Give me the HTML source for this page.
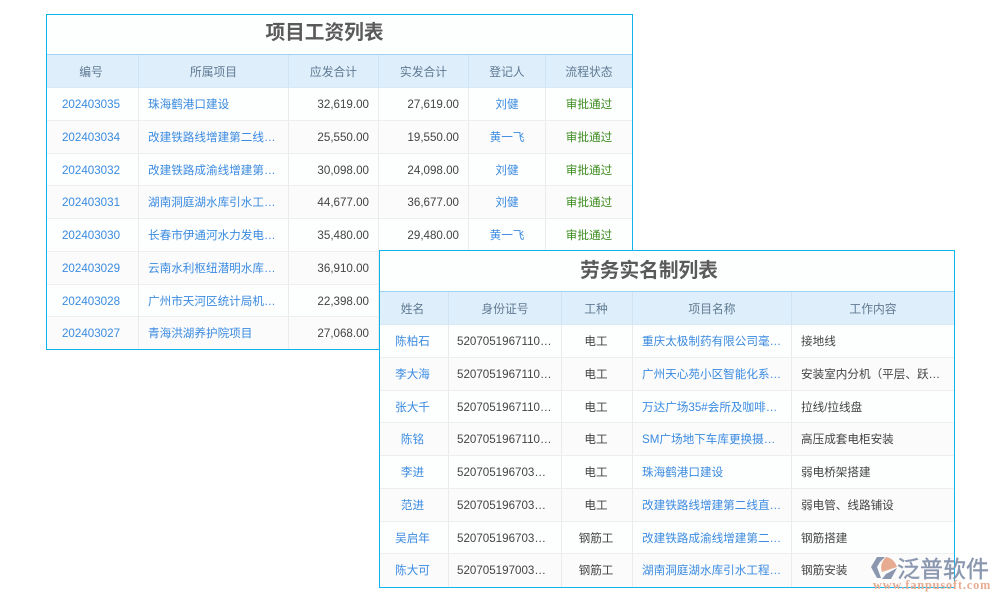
<!DOCTYPE html>
<html lang="zh">
<head>
<meta charset="utf-8">
<style>
html,body{margin:0;padding:0;width:1000px;height:600px;overflow:hidden;background:#fff}
body{position:relative;font-family:"Liberation Sans","Noto Sans CJK SC",sans-serif;font-size:11.6px;color:#444}
.t{position:absolute;box-sizing:border-box;border:1px solid #0fb3ee;background:#fdfefe;overflow:hidden}
.h1{position:absolute;left:0;right:0;top:0;height:39px;line-height:36px;text-align:center;font-size:19.7px;font-weight:bold;color:#5a5a5a}
.r{position:absolute;left:0;right:0;height:32.75px;display:flex;box-sizing:border-box;border-bottom:1px solid #eeeeee;line-height:33px}
.r.e{background:#fbfbfc}
.r.hd{background:#dfeefb;border-top:1px solid #9fd2f5;border-bottom:1px solid #d8e8f5;color:#5f7a92;height:34px;line-height:35px;font-size:11.8px}
.r>div{box-sizing:border-box;border-right:1px solid #ebebeb;white-space:nowrap;overflow:hidden;text-align:center}
.r.hd>div{border-right:1px solid #cfe3f3}
.r>div:last-child{border-right:0;flex:1}
.b{color:#3b8be0}
.l{text-align:left!important;padding-left:9px}
.n{text-align:right!important;padding-right:9px}
.g{color:#3c8c1e}
.c1{width:92px;padding-right:3px}.c2{width:150px}.c3{width:90px}.c4{width:90px}.c5{width:77px}
.d1{width:69px;padding-right:3px}.d2{width:113px}.d3{width:71px;padding-right:2px}.d4{width:159px}
.d2.l{padding-left:8px}
#logo{position:absolute;left:870px;top:554px;width:125px;height:40px}
#logo .a{position:absolute;left:27px;top:-2px;font-size:23px;line-height:30px;font-weight:normal;-webkit-text-stroke:.4px #8a97ae;color:#8a97ae;font-family:"Noto Sans CJK SC",sans-serif;white-space:nowrap}
#logo .u{position:absolute;left:3px;top:23.5px;font-family:"Liberation Serif",serif;font-size:12.2px;line-height:14px;font-weight:bold;color:#e6ab90;letter-spacing:.9px;white-space:nowrap}
</style>
</head>
<body>

<div class="t" style="left:46px;top:14px;width:587px;height:336px">
  <div class="h1" style="padding-right:30px">项目工资列表</div>
  <div class="r hd" style="top:39px"><div class="c1">编号</div><div class="c2">所属项目</div><div class="c3">应发合计</div><div class="c4">实发合计</div><div class="c5">登记人</div><div>流程状态</div></div>
  <div class="r" style="top:73px"><div class="c1 b">202403035</div><div class="c2 b l">珠海鹤港口建设</div><div class="c3 n">32,619.00</div><div class="c4 n">27,619.00</div><div class="c5 b">刘健</div><div class="g">审批通过</div></div>
  <div class="r e" style="top:105.75px"><div class="c1 b">202403034</div><div class="c2 b l">改建铁路线增建第二线…</div><div class="c3 n">25,550.00</div><div class="c4 n">19,550.00</div><div class="c5 b">黄一飞</div><div class="g">审批通过</div></div>
  <div class="r" style="top:138.5px"><div class="c1 b">202403032</div><div class="c2 b l">改建铁路成渝线增建第…</div><div class="c3 n">30,098.00</div><div class="c4 n">24,098.00</div><div class="c5 b">刘健</div><div class="g">审批通过</div></div>
  <div class="r e" style="top:171.25px"><div class="c1 b">202403031</div><div class="c2 b l">湖南洞庭湖水库引水工…</div><div class="c3 n">44,677.00</div><div class="c4 n">36,677.00</div><div class="c5 b">刘健</div><div class="g">审批通过</div></div>
  <div class="r" style="top:204px"><div class="c1 b">202403030</div><div class="c2 b l">长春市伊通河水力发电…</div><div class="c3 n">35,480.00</div><div class="c4 n">29,480.00</div><div class="c5 b">黄一飞</div><div class="g">审批通过</div></div>
  <div class="r e" style="top:236.75px"><div class="c1 b">202403029</div><div class="c2 b l">云南水利枢纽潜明水库…</div><div class="c3 n">36,910.00</div><div class="c4 n"></div><div class="c5"></div><div></div></div>
  <div class="r" style="top:269.5px"><div class="c1 b">202403028</div><div class="c2 b l">广州市天河区统计局机…</div><div class="c3 n">22,398.00</div><div class="c4 n"></div><div class="c5"></div><div></div></div>
  <div class="r e" style="top:302.25px;border-bottom:0"><div class="c1 b">202403027</div><div class="c2 b l">青海洪湖养护院项目</div><div class="c3 n">27,068.00</div><div class="c4 n"></div><div class="c5"></div><div></div></div>
</div>

<div class="t" style="left:379px;top:250px;width:576px;height:338px">
  <div class="h1" style="line-height:38px;padding-right:36px;top:1px">劳务实名制列表</div>
  <div class="r hd" style="top:40px"><div class="d1">姓名</div><div class="d2">身份证号</div><div class="d3">工种</div><div class="d4">项目名称</div><div>工作内容</div></div>
  <div class="r" style="top:74px"><div class="d1 b">陈柏石</div><div class="d2 l">5207051967110…</div><div class="d3">电工</div><div class="d4 b l">重庆太极制药有限公司毫…</div><div class="l">接地线</div></div>
  <div class="r e" style="top:106.75px"><div class="d1 b">李大海</div><div class="d2 l">5207051967110…</div><div class="d3">电工</div><div class="d4 b l">广州天心苑小区智能化系…</div><div class="l">安装室内分机（平层、跃…</div></div>
  <div class="r" style="top:139.5px"><div class="d1 b">张大千</div><div class="d2 l">5207051967110…</div><div class="d3">电工</div><div class="d4 b l">万达广场35#会所及咖啡…</div><div class="l">拉线/拉线盘</div></div>
  <div class="r e" style="top:172.25px"><div class="d1 b">陈铭</div><div class="d2 l">5207051967110…</div><div class="d3">电工</div><div class="d4 b l">SM广场地下车库更换摄…</div><div class="l">高压成套电柜安装</div></div>
  <div class="r" style="top:205px"><div class="d1 b">李进</div><div class="d2 l">520705196703…</div><div class="d3">电工</div><div class="d4 b l">珠海鹤港口建设</div><div class="l">弱电桥架搭建</div></div>
  <div class="r e" style="top:237.75px"><div class="d1 b">范进</div><div class="d2 l">520705196703…</div><div class="d3">电工</div><div class="d4 b l">改建铁路线增建第二线直…</div><div class="l">弱电管、线路铺设</div></div>
  <div class="r" style="top:270.5px"><div class="d1 b">吴启年</div><div class="d2 l">520705196703…</div><div class="d3">钢筋工</div><div class="d4 b l">改建铁路成渝线增建第二…</div><div class="l">钢筋搭建</div></div>
  <div class="r e" style="top:303.25px;border-bottom:0"><div class="d1 b">陈大可</div><div class="d2 l">520705197003…</div><div class="d3">钢筋工</div><div class="d4 b l">湖南洞庭湖水库引水工程…</div><div class="l">钢筋安装</div></div>
</div>

<div id="logo">
  <svg width="30" height="30" viewBox="0 0 30 30" style="position:absolute;left:0;top:0">
    <path d="M1 13 L7 3H15L10 8 7 13 11 24H7Z" fill="#8a97ae"/>
    <path d="M16 3 Q24 4 27 13 L12 18 Q9 10 16 3Z" fill="#e6ab90"/>
    <path d="M27 14 L21 25 H12 L16 20Z" fill="#8a97ae"/>
  </svg>
  <div class="a">泛普软件</div>
  <div class="u">www.fanpusoft.com</div>
</div>

</body>
</html>
